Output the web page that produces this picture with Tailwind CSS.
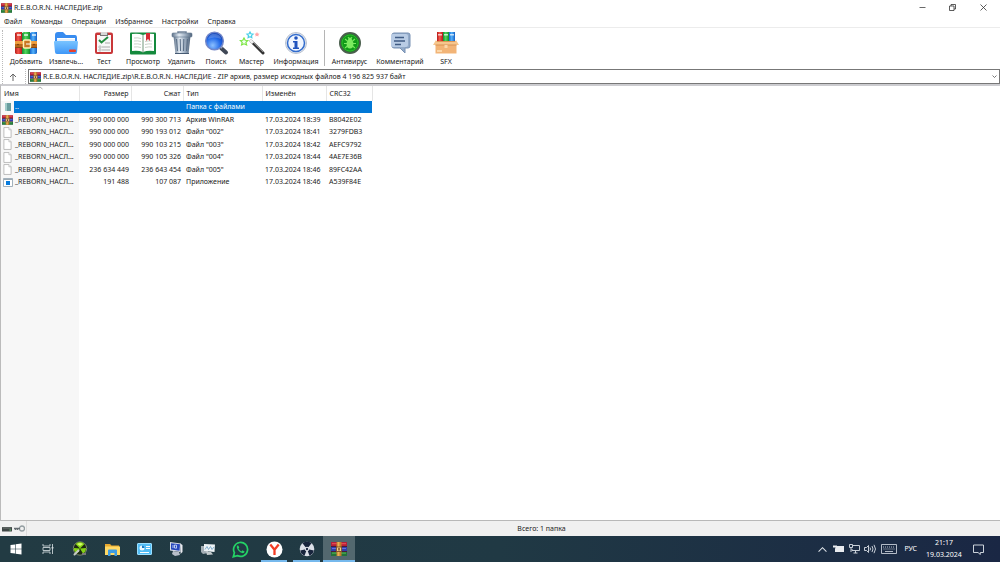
<!DOCTYPE html>
<html lang="ru" class="h-full">
	<head>
		<meta charset="UTF-8" />
		<title>R.E.B.O.R.N. НАСЛЕДИЕ.zip</title>
		<script src="https://cdn.jsdelivr.net/npm/@tailwindcss/browser@4"></script>
	</head>
	<body
		class="h-full flex flex-col overflow-hidden bg-white text-[#222] text-[7px] leading-[12px] font-['Noto_Sans','Open_Sans',sans-serif]"
	>
		<!-- Shared icons -->
		<svg class="absolute size-0">
			<defs>
				<linearGradient id="g-red" x1="0" x2="1"><stop offset="0" stop-color="#b51a1a" /><stop offset=".45" stop-color="#f4584a" /><stop offset="1" stop-color="#b8151c" /></linearGradient>
				<linearGradient id="g-green" x1="0" x2="1"><stop offset="0" stop-color="#168a32" /><stop offset=".45" stop-color="#4fd95a" /><stop offset="1" stop-color="#128b2d" /></linearGradient>
				<linearGradient id="g-blue" x1="0" x2="1"><stop offset="0" stop-color="#1668cf" /><stop offset=".45" stop-color="#53b2fb" /><stop offset="1" stop-color="#1560c4" /></linearGradient>
				<linearGradient id="g-folder" x2="0" y2="1"><stop offset="0" stop-color="#79c4ff" /><stop offset="1" stop-color="#3f97f8" /></linearGradient>
				<linearGradient id="g-steel" x1="0" x2="1"><stop offset="0" stop-color="#5d7189" /><stop offset=".35" stop-color="#e3ebf3" /><stop offset=".65" stop-color="#a2b2c4" /><stop offset="1" stop-color="#50647b" /></linearGradient>
				<radialGradient id="g-lens" cx=".4" cy=".75" r=".8"><stop offset="0" stop-color="#8cc0ff" /><stop offset=".55" stop-color="#2269e8" /><stop offset="1" stop-color="#0b37a8" /></radialGradient>
			</defs>
			<symbol id="i-rar" viewBox="0 0 16 14">
				<path fill="#b3203a" d="M0 0h16v4.500H0z" />
				<path fill="#2f3fae" d="M0 5h16v4H0z" />
				<path fill="#23713a" d="M0 9.500h16V14H0z" />
				<path fill="#e2494f" d="M1 1h14v1.300H1z" />
				<path fill="#6470dc" d="M1 6h14v1H1z" />
				<path fill="#4faf50" d="M1 10.500h14v1.200H1z" />
				<path fill="#4a1c38" d="M0 4h16v1H0zM0 9h16v1H0z" />
				<path fill="#c27b2b" d="M5.500 0h5v14h-5z" />
				<path fill="#e9b356" d="M6.500 0h2v14h-2z" />
				<path fill="#f0cf88" stroke="#693c20" stroke-width=".8" d="M5.400 5h5.200v4.500H5.400z" />
				<path fill="#744020" d="M7.300 6h1.400v2.500H7.300z" />
			</symbol>
			<symbol id="i-page" viewBox="0 0 10 12">
				<path fill="#fff" stroke="#a7a7a7" stroke-width=".8" d="M1 .5h5.500L9 3v8.500H1z" />
				<path fill="#eee" stroke="#a7a7a7" stroke-width=".6" d="M6.500.5V3H9" />
			</symbol>
		</svg>

		<header class="flex h-[15px] shrink-0 items-center">
			<svg class="ml-px h-[10px] w-[11px]"><use href="#i-rar" /></svg>
			<h1 class="ml-[2px]">R.E.B.O.R.N. НАСЛЕДИЕ.zip</h1>
			<div class="ml-auto flex">
				<button aria-label="Свернуть" class="grid h-[15px] w-[30px] place-items-center">
					<svg class="size-[7px]" viewBox="0 0 7 7" stroke="#444"><path d="M.5 3.500h6" stroke-width=".8" /></svg>
				</button>
				<button aria-label="Восстановить" class="grid h-[15px] w-[31px] place-items-center">
					<svg class="size-[7px]" viewBox="0 0 7 7" fill="none" stroke="#333" stroke-width=".8"><path d="M.5 2h4.500v4.500H.5zM2 2V.5h4.500V5H5" /></svg>
				</button>
				<button aria-label="Закрыть" class="mr-px grid h-[15px] w-[31px] place-items-center">
					<svg class="size-[7px]" viewBox="0 0 7 7" stroke="#333" stroke-width=".8"><path d="M.5.5l6 6M6.500.5l-6 6" /></svg>
				</button>
			</div>
		</header>

		<nav class="flex h-[13px] shrink-0 items-center gap-[9px] border-b border-[#ececec] pt-[2px] pl-1">
			<button>Файл</button>
			<button>Команды</button>
			<button>Операции</button>
			<button>Избранное</button>
			<button>Настройки</button>
			<button>Справка</button>
		</nav>

		<div class="flex h-[41px] shrink-0 pt-[2px]">
			<div class="mr-[3px] ml-[2px] h-[38px] border-l border-dotted border-[#bbb]"></div>
			<button class="flex w-10 flex-col items-center">
				<svg class="size-[26px] shrink-0" viewBox="0 0 26 26">
					<path fill="url(#g-red)" d="M2 3l2-1h5v22H3l-1-1z" />
					<path fill="url(#g-green)" d="M9 3l2-1h6v22H9z" />
					<path fill="url(#g-blue)" d="M17 3l2-1h5v21l-1 1h-6z" />
					<path fill="#fff" opacity=".65" d="M4 4h4v2H4zM11 4h4v2h-4zM19 4h4v2h-4z" />
					<path fill="#b86617" d="M2 11h22v7H2z" />
					<path fill="#ef9e3e" d="M2 11h22v3H2z" />
					<path fill="#8b4811" d="M2 17h22v1H2z" />
					<rect x="10.500" y="10" width="7" height="8" rx="1" fill="#c97721" stroke="#fff0b5" stroke-width="1.500" />
					<path stroke="#fff" d="M13 14h5" />
					<circle cx="21" cy="14.500" r=".7" fill="#5d300e" /><circle cx="5" cy="14.500" r=".7" fill="#5d300e" />
				</svg>
				<span>Добавить</span>
			</button>
			<button class="flex w-10 flex-col items-center">
				<svg class="size-[26px] shrink-0" viewBox="0 0 26 26">
					<path fill="#388cf0" d="M2 5q0-3 3-3h5l3 3h9q2 0 2 3v13H2z" />
					<path fill="#fff" d="M4 8h18v5H4z" />
					<path fill="#cfe3f8" d="M4 9.500h18v1H4z" />
					<path fill="url(#g-folder)" d="M1 12q0-1 1-1h22q1 0 1 1l-1 10q0 2-2 2H4q-2 0-2-2z" />
					<rect x="16" y="19.500" width="7" height="2.500" rx="1" fill="#e83f2d" />
				</svg>
				<span>Извлечь...</span>
			</button>
			<button class="flex w-9 flex-col items-center">
				<svg class="size-[26px] shrink-0" viewBox="0 0 26 26">
					<rect x="4" y="2.500" width="18" height="21.500" rx="2" fill="#c93739" />
					<path fill="#f8f8f8" d="M6 5h14v17H6z" />
					<path fill="#777" d="M9 3h8v3H9z" /><path fill="#d8d8d8" d="M10 2h6v3h-6z" />
					<path stroke="#aaa" d="M14 13h5M11 17h8M11 20h8" />
					<path fill="none" stroke="#aaa" stroke-width=".7" d="M8 16h2v2H8zM8 19h2v2H8z" />
					<path fill="none" stroke="#218b3e" stroke-width="2" d="M8 10l2.500 2.500L17 7" />
				</svg>
				<span>Тест</span>
			</button>
			<button class="flex w-[42px] flex-col items-center">
				<svg class="h-[26px] w-[28px] shrink-0" viewBox="0 0 28 26">
					<rect x="1" y="2.500" width="26" height="22" rx="1" fill="#148a3d" />
					<path fill="#fff" d="M3 4q6-1 11 1 5-2 11-1v17q-6-1-11 1-5-2-11-1z" />
					<path fill="none" stroke="#bac7ba" stroke-width=".8" d="M5 8q4-.5 7 .5M5 11q4-.5 7 .5M5 14q4-.5 7 .5M5 17q4-.5 7 .5M16 11.500q4-1 7-.5M16 14.500q4-1 7-.5M16 17.500q4-1 7-.5" />
					<path stroke="#71967a" d="M14 5v18" />
					<path fill="#d72a34" d="M17 3h4v8l-2-2-2 2z" />
				</svg>
				<span>Просмотр</span>
			</button>
			<button class="flex w-[35px] flex-col items-center">
				<svg class="size-[26px] shrink-0" viewBox="0 0 26 26">
					<path fill="none" stroke="#71849a" stroke-width="1.500" d="M9 3.500V2h8v1.500" />
					<path fill="url(#g-steel)" d="M4.500 6h17l-2 18h-13z" />
					<rect x="3" y="3" width="20" height="4" rx="1" fill="url(#g-steel)" stroke="#60758d" stroke-width=".6" />
					<path stroke="#5c7088" stroke-width="1.100" d="M7.500 9l1 12M11.200 9l.3 12M14.800 9l-.3 12M18.500 9l-1 12" />
					<path stroke="#465a72" d="M6 23.500h14" />
				</svg>
				<span>Удалить</span>
			</button>
			<button class="flex w-[34px] flex-col items-center">
				<svg class="size-[26px] shrink-0" viewBox="0 0 26 26">
					<path stroke="#404856" stroke-width="4" stroke-linecap="round" d="M18 18l5 4.500" />
					<path stroke="#aab3c4" stroke-width="2" d="M17 16l2 2" />
					<circle cx="11.500" cy="11" r="8.800" fill="url(#g-lens)" stroke="#7387c8" stroke-width="1.500" />
					<path fill="#fff" opacity=".2" d="M5 9q2-6 8-5 5 1 5 5-6-3-13 0z" />
				</svg>
				<span>Поиск</span>
			</button>
			<button class="flex w-[37px] flex-col items-center">
				<svg class="size-[26px] shrink-0" viewBox="0 0 26 26">
					<path stroke="#333" stroke-width="3" stroke-linecap="round" d="M12 11l12 12" />
					<path stroke="#888" d="M12 10l12 12" />
					<path stroke="#eee" stroke-width="3" d="M11 10l3 3" />
					<path fill="#effff0" stroke="#7ce543" stroke-width="1.200" d="M5 8l1.200 2.300 2.600.2-1.900 1.900.7 2.600L5 13.800 2.600 15l.6-2.600-1.900-1.900 2.500-.2z" />
					<path fill="#efffff" stroke="#47cee8" stroke-width="1.200" d="M11 2l.9 1.800 2.100.3-1.500 1.500.3 2.100-1.800-1-1.900 1 .4-2.100L8 4.100l2.100-.3z" />
					<path fill="#ffa5a5" d="M18 2l.8 1.400 1.700.3-1.200 1.200.2 1.700-1.500-.8-1.600.8.3-1.700-1.200-1.200 1.700-.3z" />
				</svg>
				<span>Мастер</span>
			</button>
			<button class="flex w-[52px] flex-col items-center">
				<svg class="size-[26px] shrink-0" viewBox="0 0 26 26">
					<circle cx="13" cy="13" r="10.500" fill="#dfe5ef" stroke="#b9c2d0" />
					<circle cx="13" cy="13" r="8.500" fill="#f0f6ff" stroke="#326ccd" stroke-width="1.500" />
					<circle cx="13" cy="8" r="1.800" fill="#1f53be" />
					<path fill="#1f53be" d="M10 11h4.500v6.500H16V19h-6v-1.500h1.500v-5H10z" />
				</svg>
				<span>Информация</span>
			</button>
			<div class="mr-[2px] ml-[2px] h-[36px] border-l border-[#b5b5b5]"></div>
			<button class="flex w-[45px] flex-col items-center">
				<svg class="size-[26px] shrink-0" viewBox="0 0 26 26">
					<circle cx="13" cy="13" r="10" fill="#109a18" stroke="#4a5f4d" stroke-width="2" />
					<circle cx="13" cy="13" r="8" fill="none" stroke="#2cb92c" />
					<path stroke="#7ceb60" stroke-width="1.100" fill="none" d="M8 9l2.500 2M18 9l-2.500 2M7 13.500h3M19 13.500h-3M8 18l2.500-2M18 18l-2.500-2M11 7l1 1.500M15 7l-1 1.500" />
					<ellipse cx="13" cy="14" rx="3.400" ry="4.500" fill="#7ceb60" />
					<circle cx="13" cy="9.300" r="1.800" fill="#7ceb60" />
				</svg>
				<span>Антивирус</span>
			</button>
			<button class="flex w-14 flex-col items-center">
				<svg class="size-[26px] shrink-0" viewBox="0 0 26 26">
					<path fill="#93abc9" stroke="#7891b4" d="M7 3h14q2 0 2 2v11q0 2-2 2h-3v5l-5-5H7q-2 0-2-2V5q0-2 2-2z" />
					<path fill="#b9cce5" d="M4 6q0-2 2-2h13q2 0 2 2v9q0 2-2 2H6q-2 0-2-2z" />
					<path stroke="#405b84" stroke-width="1.300" d="M8 7.500h9M7 11h11M8 14.500h6" />
				</svg>
				<span>Комментарий</span>
			</button>
			<button class="flex w-9 flex-col items-center">
				<svg class="size-[26px] shrink-0" viewBox="0 0 26 26">
					<path fill="url(#g-red)" d="M4 2h6v11H4z" /><path fill="url(#g-green)" d="M10 2h6v11h-6z" /><path fill="url(#g-blue)" d="M16 2h6v11h-6z" />
					<path fill="#fff" opacity=".7" d="M5 4h4v1.500H5zM11 4h4v1.500h-4zM17 4h4v1.500h-4z" />
					<path fill="#df9754" d="M3 11h20v4H3z" />
					<path fill="#f6c68e" d="M3 10L0 15h26l-3-5-1 2H4z" />
					<path fill="#f2b477" d="M2.500 15h21v8.500h-21z" />
					<path fill="#d99255" d="M2.500 14.500h21v1h-21z" />
					<path fill="#fbd7a9" d="M4 20h5v2H4zM11.500 15h3v3h-3z" />
				</svg>
				<span>SFX</span>
			</button>
		</div>

		<div class="flex h-[15px] shrink-0 items-stretch">
			<div class="ml-[2px] border-l border-dotted border-[#bbb]"></div>
			<button aria-label="Вверх" class="grid w-[19px] place-items-center">
				<svg class="size-[8px]" viewBox="0 0 8 8" fill="none" stroke="#666"><path d="M4 8V1M1 4l3-3 3 3" /></svg>
			</button>
			<div class="mr-[2px] ml-[3px] border-l border-dotted border-[#bbb]"></div>
			<label class="flex flex-1 items-center border border-[#777] pl-px">
				<svg class="h-[10px] w-[11px] shrink-0"><use href="#i-rar" /></svg>
				<input
					aria-label="Путь"
					class="ml-[2px] min-w-0 flex-1 outline-none"
					value="R.E.B.O.R.N. НАСЛЕДИЕ.zip\R.E.B.O.R.N. НАСЛЕДИЕ - ZIP архив, размер исходных файлов 4 196 825 937 байт"
				/>
				<svg class="mr-[2px] size-[5px]" viewBox="0 0 5 5" fill="none" stroke="#555" stroke-width=".8"><path d="M.5 1.500l2 2 2-2" /></svg>
			</label>
		</div>

		<!-- File list -->
		<main class="relative min-h-0 flex-1 overflow-hidden border-t-2 border-b border-l border-t-[#ccccd0] border-b-[#b8b8b8] border-l-[#bbb]">
			<div class="absolute inset-y-0 left-0 w-[78px] bg-[#f7f7f7]"></div>
			<table class="relative w-[371px] table-fixed border-collapse whitespace-nowrap">
				<colgroup>
					<col class="w-[13px]" />
					<col class="w-[65px]" />
					<col class="w-[52px]" />
					<col class="w-[52px]" />
					<col class="w-[79px]" />
					<col class="w-[64px]" />
					<col class="w-[46px]" />
				</colgroup>
				<thead>
					<tr class="h-[15px] bg-white text-left *:p-0 *:font-normal">
						<th colspan="2" class="border-r border-[#e5e5e5]"><span class="pl-[3px]">Имя</span></th>
						<th class="border-r border-[#e5e5e5] text-right"><span class="pr-[2px]">Размер</span></th>
						<th class="border-r border-[#e5e5e5] text-right"><span class="pr-[2px]">Сжат</span></th>
						<th class="border-r border-[#e5e5e5]"><span class="pl-[3px]">Тип</span></th>
						<th class="border-r border-[#e5e5e5]"><span class="pl-[3px]">Изменён</span></th>
						<th class="border-r border-[#e5e5e5]"><span class="pl-[3px]">CRC32</span></th>
					</tr>
				</thead>
				<tbody id="files"></tbody>
			</table>
			<svg class="absolute top-0 left-[36px] h-[4px] w-[6px]" viewBox="0 0 6 4" fill="none" stroke="#888" stroke-width=".7"><path d="M.5 3L3 1l2.500 2" /></svg>
		</main>

		<footer class="flex h-[15px] shrink-0 items-center bg-[#f0f0f0]">
			<div class="flex h-full w-[27px] items-center gap-[2px] border-r border-[#ddd] pl-[2px]">
				<svg class="h-[6px] w-[10px]" viewBox="0 0 10 6"><rect y="1" width="10" height="4.500" rx=".5" fill="#404746" /><path stroke="#9daaa5" stroke-width=".5" d="M1 2h8" /><path fill="#65d977" d="M7.500 3.500H9v1H7.500z" /></svg>
				<svg class="h-[7px] w-[11px]" viewBox="0 0 11 7" fill="none"><circle cx="8" cy="3.500" r="2.500" stroke="#939da1" stroke-width="1.300" /><path stroke="#666e72" stroke-width="1.300" d="M0 3.500h6M1.500 3v2M3.500 3v2" /></svg>
			</div>
			<p class="flex-1 text-center"><span class="pl-[56px]">Всего: 1 папка</span></p>
		</footer>

		<div class="flex h-[26px] shrink-0 items-stretch bg-linear-to-r from-[#223b43] via-[#203944] to-[#1a2744] text-white">
			<div class="flex *:grid *:w-8 *:place-items-center">
				<button aria-label="Пуск">
					<svg class="size-[12px]" viewBox="0 0 12 12" fill="#fff"><path d="M.5 2L5 1.400v4.300H.5zM5.600 1.300L11.500.5v5.200H5.600zM.5 6.300H5v4.300L.5 10zM5.600 6.300h5.900v5.200l-5.900-.8z" /></svg>
				</button>
				<button aria-label="Представление задач">
					<svg class="size-[12px]" viewBox="0 0 12 12" fill="none" stroke="#c7d1d5" stroke-width=".9"><path d="M1 1v2h7V1M1 11V9h7v2M1 4.500h7v3H1zM10.500 1v10" /><path fill="#fff" d="M10 4h1v1.500h-1z" /></svg>
				</button>
				<button aria-label="Радар">
					<svg class="size-[16px]" viewBox="0 0 16 16"><circle cx="8" cy="7.500" r="6.700" fill="#1c2912" stroke="#78866f" /><path fill="#83d116" d="M8 7.500L3.500 3Q8-1 12.500 3zM8 7.500l6-.5q0 4-3 5.500zM8 7.500L5 12.500Q1 10 2 7z" /><path fill="#d3ff65" d="M5 3q3-2 6 0L8 5z" /><path stroke="#c6ccc3" stroke-width="2" stroke-linecap="round" d="M2.500 13.500l4-4" /><path stroke="#777" stroke-width="2" d="M10 13h4" /></svg>
				</button>
				<button aria-label="Проводник">
					<svg class="h-[13px] w-[15px]" viewBox="0 0 15 13"><path fill="#e8a92f" d="M0 1h5l1.500 1.500H14V6H0z" /><path fill="#ffd965" d="M0 3.500h15V12H0z" /><path fill="#3e9ce2" d="M3 7.500q0-1 1-1h7q1 0 1 1V13H9.500v-3h-4v3H3z" /></svg>
				</button>
				<button aria-label="Панель управления">
					<svg class="h-[12px] w-[15px]" viewBox="0 0 15 12"><rect x=".5" y=".5" width="14" height="11" rx=".5" fill="#52bdf5" stroke="#9bdfff" /><circle cx="5" cy="5" r="2.500" fill="#e9f8ff" /><path fill="#1679c4" d="M5 5V2.500A2.500 2.500 0 017.500 5z" /><path stroke="#fff" d="M9 3.500h4M9 5.500h4M3 9.500h9" /></svg>
				</button>
				<button aria-label="Компьютер">
					<svg class="size-[16px]" viewBox="0 0 16 16"><path fill="#d9dde6" d="M2 1l11 1.500-.5 8.500L2 9.500z" /><path fill="#2748bc" d="M3 2.300l9 1-.5 6.500L3 8.500z" /><path stroke="#dbe8ff" stroke-width=".8" fill="none" d="M5 4v3M6.500 4l2 .2v3l-2-.2z" /><path fill="#b8bec9" d="M5 10l6 1 1 3-5 1-3-2z" /><path fill="#e9eaf0" d="M13 3l1.500 1v7L12.500 13z" /></svg>
				</button>
				<button aria-label="Монитор системы">
					<svg class="size-[16px]" viewBox="0 0 16 16"><path fill="#a5afb6" d="M1 5h7v7l-5 1-2-2z" /><path fill="#edf3f6" d="M4 3l11 .5-.5 7.500L4 10z" /><path fill="none" stroke="#79a9cc" stroke-width=".9" d="M5 8.500l2-3 1.500 3 2-3 1.500 3L14 6" /><path fill="#c3cacd" d="M6 10.500l5 .5 2 2.500-6 .5z" /></svg>
				</button>
				<button aria-label="WhatsApp">
					<svg class="size-[17px]" viewBox="0 0 17 17"><path fill="none" stroke="#24d366" stroke-width="1.700" d="M1.300 15.700l1.100-4A7 7 0 115.300 14.600z" /><path fill="#24d366" d="M6 4.200c-.8.3-1.500 1.200-1.100 2.500.7 2.600 2.600 4.600 5.200 5.400 1.300.4 2.300-.5 2.500-1.600l-2.200-1.200-1 1.100Q7.400 9.500 6.500 7.600l.8-1z" /></svg>
				</button>
			</div>
			<!-- Running apps -->
			<div class="ml-[5px] flex gap-[6px] *:grid *:place-items-center *:border-b-2 *:border-[#76b9ed] *:pt-[2px]">
				<button aria-label="Яндекс" class="w-[26px]">
					<svg class="size-[17px]" viewBox="0 0 17 17"><circle cx="8.500" cy="8.500" r="8" fill="#fff" /><path fill="none" stroke="#f33d24" stroke-width="2.300" d="M4.300 3.500l4.200 5.200 4.200-5.200M8.500 8v6" /></svg>
				</button>
				<button aria-label="Радиация" class="w-[27px]">
					<svg class="size-[16px]" viewBox="0 0 16 16"><circle cx="8" cy="8" r="7.300" fill="#dbe0e8" /><path fill="#17243c" d="M8 8L3.500 2.200a7 7 0 019 0zM8 8l6.800 1.500a7 7 0 01-4.300 5.200zM8 8L5.500 14.700A7 7 0 011.200 9.500z" /><circle cx="8" cy="8" r="2.200" fill="#e4e8ef" /><circle cx="8" cy="8" r="1.200" fill="#222f45" /></svg>
				</button>
				<button aria-label="WinRAR" class="-ml-[3px] w-8 bg-[#53686f]">
					<svg class="h-[14px] w-[16px]"><use href="#i-rar" /></svg>
				</button>
			</div>
			<div class="ml-auto flex items-center">
				<svg class="w-[9px]" viewBox="0 0 8 6" fill="none" stroke="#e0e5eb" stroke-width=".9"><path d="M.5 5L4 1.500 7.500 5" /></svg>
				<svg class="ml-[6px] w-[11px]" viewBox="0 0 11 8"><path fill="#e8ebef" d="M3 1h8v6H2V4z" /><path stroke="#e8ebef" d="M0 1.500h4M1 0v3M3 0v3" /></svg>
				<svg class="ml-[5px] w-[11px]" viewBox="0 0 11 10" fill="none" stroke="#dbe1e8" stroke-width=".9"><path d="M4 1.500h6.500v5H3V5M6.500 6.500V9M4.500 9h4M.5.5h3v3h-3zM2 3.500V8" /></svg>
				<svg class="ml-[4px] w-[12px]" viewBox="0 0 12 10" fill="none" stroke="#dbe1e8" stroke-width=".9"><path d="M.5 3.500h2l2-2v7l-2-2h-2zM6 3.500q1 1.500 0 3M8 2q2 3 0 6M10 .8q3 4.200 0 8.400" /></svg>
				<svg class="ml-[5px] w-[16px]" viewBox="0 0 16 10" fill="none" stroke="#dbe1e8" stroke-width=".8"><path d="M.5.5h15v9H.5z" /><path stroke-dasharray="1 1" d="M2 3h12M2.500 5h11" /><path d="M4 7.500h8" /></svg>
				<button class="ml-[7px]">РУС</button>
				<time class="ml-[8px] w-[38px] text-center">21:17<br />19.03.2024</time>
				<button aria-label="Уведомления" class="mr-[16px] ml-[10px]">
					<svg class="size-[11px]" viewBox="0 0 11 11" fill="none" stroke="#e0e5eb" stroke-width=".9"><path d="M.5 1h10v7.500H7.300V10.500L5 8.500H.5z" /></svg>
				</button>
			</div>
		</div>

		<script>
			const files = [
				["dir", "..", "", "", "Папка с файлами", "", ""],
				["rar", "_REBORN_НАСЛ...", "990 000 000", "990 300 713", "Архив WinRAR", "17.03.2024 18:39", "B8042E02"],
				["page", "_REBORN_НАСЛ...", "990 000 000", "990 193 012", 'Файл "002"', "17.03.2024 18:41", "3279FDB3"],
				["page", "_REBORN_НАСЛ...", "990 000 000", "990 103 215", 'Файл "003"', "17.03.2024 18:42", "AEFC9792"],
				["page", "_REBORN_НАСЛ...", "990 000 000", "990 105 326", 'Файл "004"', "17.03.2024 18:44", "4AE7E36B"],
				["page", "_REBORN_НАСЛ...", "236 634 449", "236 643 454", 'Файл "005"', "17.03.2024 18:46", "89FC42AA"],
				["exe", "_REBORN_НАСЛ...", "191 488", "107 087", "Приложение", "17.03.2024 18:46", "A539F84E"],
			];

			const icons = {
				dir: '<svg class="mx-auto h-[10px] w-[8px]" viewBox="0 0 8 10"><path fill="#689d9e" d="M1 1h6v8H1z"/><path fill="#9fcac8" d="M1 1h2v8H1z"/></svg>',
				rar: '<svg class="mx-auto h-[10px] w-[11px]"><use href="#i-rar"/></svg>',
				page: '<svg class="mx-auto h-[11px] w-[9px]"><use href="#i-page"/></svg>',
				exe: '<svg class="mx-auto h-[9px] w-[10px]" viewBox="0 0 10 9"><path fill="#fff" stroke="#8da0ad" stroke-width=".8" d="M.5.5h9v8h-9z"/><path fill="#9daab3" d="M1 1h8v1H1z"/><path fill="#087bdc" d="M3 3h4v4H3z"/></svg>',
			};

			document.getElementById("files").innerHTML = files
				.map(([icon, name, size, packed, type, date, crc]) => {
					const sel = icon === "dir" ? "bg-[#0078d7] text-white" : "";
					return `<tr class="h-[12px] even:h-[13px] *:p-0 *:leading-[12px]">
						<td>${icons[icon]}</td>
						<td class="${sel}"><span class="pl-px">${name}</span></td>
						<td class="${sel} text-right"><span class="pr-[2px]">${size}</span></td>
						<td class="${sel} text-right"><span class="pr-[2px]">${packed}</span></td>
						<td class="${sel}"><span class="pl-[3px]">${type}</span></td>
						<td class="${sel}"><span class="pl-[3px]">${date}</span></td>
						<td class="${sel}"><span class="pl-[3px]">${crc}</span></td>
					</tr>`;
				})
				.join("");
		</script>
	</body>
</html>
